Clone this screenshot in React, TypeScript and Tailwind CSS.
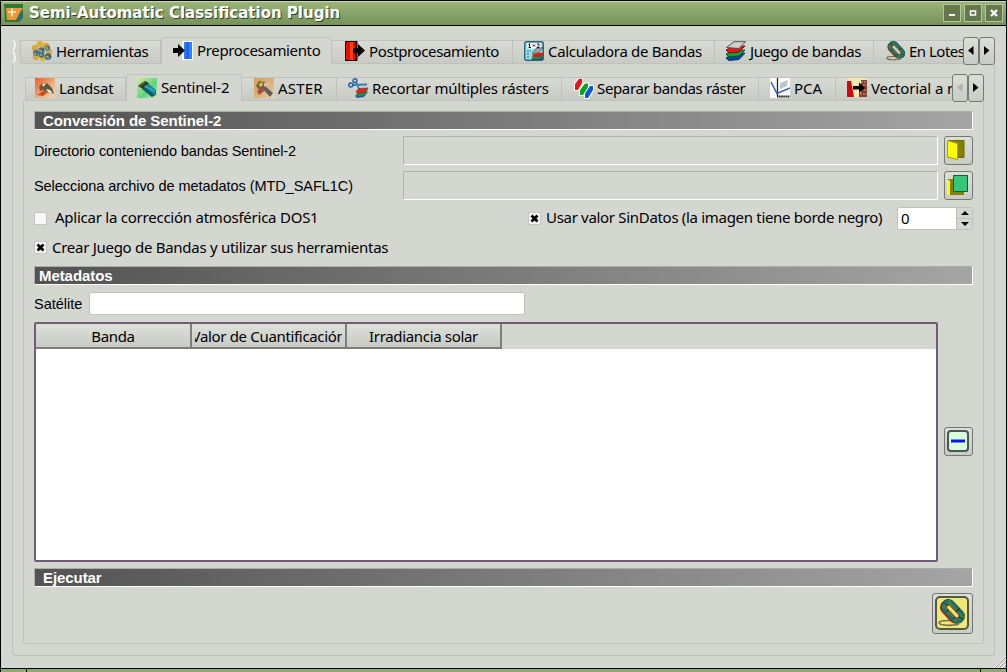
import React from "react";

const ub = "font-['Noto_Sans','Open_Sans',sans-serif]";
const ar = "font-['Liberation_Sans',Arial,sans-serif]";

function Globes() {
  const pts: [number, number, string][] = [[8, 3, "#e0b030"], [14, 5, "#d9a628"], [3, 7, "#d8a93a"], [17, 11, "#c9b04a"], [4, 16, "#dba834"], [11, 17, "#e2b63a"]];
  return (
    <svg width="20" height="20" viewBox="0 0 20 20">
      {pts.map(([x, y, c]) => <circle key={`${x}-${y}`} cx={x} cy={y} r="3.2" fill={c} />)}
      <circle cx="4" cy="12" r="3" fill="#3f6fa4" /><circle cx="9.500" cy="9.500" r="3.300" fill="#3b7296" />
      <circle cx="15.500" cy="7" r="2.800" fill="#5580a5" /><circle cx="16" cy="15.500" r="3.300" fill="#31609a" /><circle cx="9.500" cy="14" r="2.800" fill="#3d6a96" />
      <path d="M2 12l2 2M7 9l3 2M14 6l2 2M14 15l3 2M8 13l2 2" stroke="#8fc04c" strokeWidth="1.600" />
      <path d="M4 11l1-1M10 8l1 1M16 6l1 1M16 14l2 1" stroke="#b8402c" strokeWidth="1.500" />
    </svg>
  );
}

function ArrowIn() {
  return (
    <svg width="22" height="20" viewBox="0 0 22 20">
      <path d="M10 0h11v19H10z" fill="#fff" />
      <path d="M12 1h8v17h-8z" fill="#1668f0" /><path d="M12 1h2v17h-2z" fill="#3a78ee" /><path d="M17 1h3v17h-3z" fill="#2f7fff" />
      <path d="M1 7h5V3l7 6.500-7 6.500v-4H1z" fill="#000" />
    </svg>
  );
}

function ArrowOut() {
  return (
    <svg width="21" height="21" viewBox="0 0 21 21">
      <path d="M.5.5H12v19H.5z" fill="#e80c08" stroke="#000" />
      <path d="M5 1h3v18H5z" fill="#ff4010" /><path d="M10 1h2v18h-2z" fill="#400" />
      <path d="M8 7h5V3l7 6.500-7 6.500v-4H8z" fill="#000" />
    </svg>
  );
}

function Layers() {
  return (
    <svg width="22" height="21" viewBox="0 0 22 21">
      <path d="M1 17l6-4 13-1-6 6.500-10 1z" fill="#0c45a8" stroke="#092c66" />
      <path d="M1 13l6-3 13-1-6 6-10 1z" fill="#13a332" stroke="#075019" />
      <path d="M1 9l6-3 13-1-6 6-10 1z" fill="#ef141b" stroke="#780e0e" />
      <path d="M1.500 6.500L9 .7h11.500L14 7.500z" fill="#cfd0cc" stroke="#555" />
    </svg>
  );
}

function Calc() {
  return (
    <svg width="20" height="21" viewBox="0 0 20 21">
      <rect x=".7" y=".7" width="18.600" height="18.600" rx="2" fill="#9bdee8" stroke="#2a6674" strokeWidth="1.400" />
      <path d="M3 2h14v5.500H3z" fill="#fff" />
      <path d="M5.500 2.500V6.500M4.500 3.500l1-.7M4.500 6.500h2.500M9 3.500l2 2M11 3.500l-2 2M13 3h2v1.500l-2 2h2.500" stroke="#111" fill="none" />
      <path d="M3 10h2M3 13h2M6 10h1M3 16h2" stroke="#3e98aa" strokeWidth="1.300" />
      <path d="M7 19l4-3 8-1v4z" fill="#164f9b" /><path d="M7 18l4-4 8-1v3l-3 2z" fill="#1e8c33" />
      <path d="M7 15.500l4-3 8-1v2l-3 2.500z" fill="#d61b1b" /><path d="M8 13l4-5.500 7-1-4 5z" fill="#a4aaa7" stroke="#444" strokeWidth=".7" />
    </svg>
  );
}

function Ring({ size = 20, hole = "#d0d3cc" }: { size?: number; hole?: string }) {
  return (
    <svg width={size} height={size} viewBox="0 0 20 20">
      <path d="M15 18c-5 1.200-13 1-14-.6s3-2.200 8-2" fill="none" stroke="#777052" strokeWidth="1.200" />
      <g transform="rotate(47 10.500 9)">
        <rect x=".5" y="5" width="19" height="10" rx="5" fill="#b5301c" />
        <rect x=".5" y="3.500" width="20" height="10.500" rx="5.200" fill="#12362c" />
        <rect x="2.500" y="5.500" width="16" height="6.600" rx="3.300" fill="none" stroke="#2f8a3c" strokeWidth="3.200" strokeDasharray="6 .9" />
        <rect x="1.900" y="4.800" width="17.200" height="8" rx="4" fill="none" stroke="#22697e" strokeWidth="1.800" strokeDasharray="5.200 1.700" />
        <rect x="4.800" y="7.400" width="11.400" height="3" rx="1.500" fill={hole} stroke="#a8442c" strokeWidth=".8" />
      </g>
    </svg>
  );
}

function Satellite({ kind }: { kind: "landsat" | "sentinel" | "aster" }) {
  const cols = { landsat: ["#f05a28", "#e8b48a", "#efd9b4"], sentinel: ["#d9e8a0", "#58d67c", "#d8e4b4"], aster: ["#d3a066", "#e2b377", "#ead9ae"] }[kind];
  return (
    <svg width="20" height="20" viewBox="0 0 20 20">
      <defs><linearGradient id={kind} x2="1" y2="1"><stop stopColor={cols[0]} /><stop offset=".6" stopColor={cols[1]} /><stop offset="1" stopColor={cols[2]} /></linearGradient></defs>
      <rect width="20" height="20" fill={`url(#${kind})`} />
      {kind === "landsat" && <>
        <path d="M4 9l3-4 4 2-2 5-4 1z" fill="#7e5634" /><path d="M7 6l3 0 2 3-3 2z" fill="#efe6c8" />
        <path d="M8 9l4-4 5 5 2 6-4-1-6-2z" fill="#5a5a3c" /><path d="M11 11l4 1 3 4-5-2z" fill="#f6f2dc" /><path d="M2 17l6-4 5 1-5 4z" fill="#cf4a22" />
      </>}
      {kind === "sentinel" && <>
        <path d="M2 7l6-4 11 9v5l-4 2-8-7z" fill="#167d86" /><path d="M1 8l7-5 4 2-6 6z" fill="#32401e" />
        <path d="M9 7l9 5v3L7 9z" fill="#22a4bc" /><path d="M5 11l4-1 8 7-2 2z" fill="#125b66" /><path d="M3 8l5-4" stroke="#8a7a38" />
      </>}
      {kind === "aster" && <>
        <path d="M2 8l3-5 6 1-1 6-5 2z" fill="#79632e" /><path d="M3 13l6-4 1 4-5 4z" fill="#a0504a" />
        <path d="M10 5l6-1-2 5-4 1z" fill="#c9c4ac" /><path d="M11 8l8 7-3 4-7-8z" fill="#5b5c64" /><path d="M5 6l3-2 1 3-3 2z" fill="#d8c65b" />
      </>}
    </svg>
  );
}

function Scissors() {
  return (
    <svg width="21" height="20" viewBox="0 0 21 20">
      <path d="M5 7l14-.5M8 4l3 7" stroke="#397db0" strokeWidth="1.800" />
      <circle cx="2.800" cy="7" r="2" fill="none" stroke="#2463a1" strokeWidth="1.500" />
      <circle cx="7" cy="2.700" r="1.900" fill="none" stroke="#2463a1" strokeWidth="1.500" />
      <path d="M7 18l3-3 10-1-4 5-7 1z" fill="#1c5ba6" /><path d="M8 16l3-3 9-1-3 5-7 1z" fill="#2c9238" />
      <path d="M8 13.500l3-3 9-.5-3 4.500-7 1z" fill="#e0242a" stroke="#6d3322" strokeWidth=".7" />
    </svg>
  );
}

function Stripes() {
  return (
    <svg width="20" height="21" viewBox="0 0 20 21">
      <g fill="none" stroke="#fff" strokeWidth="2"><path d="M1 12V6L5 .8h3V5L4 12z" /><path d="M6 17v-5l5-6.500h3V9l-5 8z" /><path d="M11 20v-4.500l5-7.500h3v4L14 20z" /></g>
      <path d="M1 12V6L5 .8h3V5L4 12z" fill="#e9131d" /><path d="M6 17v-5l5-6.500h3V9l-5 8z" fill="#07a51c" /><path d="M11 20v-4.500l5-7.500h3v4L14 20z" fill="#1059d5" />
    </svg>
  );
}

function Pca() {
  return (
    <svg width="20" height="20" viewBox="0 0 20 20">
      <path d="M0 0h20v20H0z" fill="#fff" /><path d="M10 5l8-3-1 6-7 3z" fill="#b5cbc8" />
      <path d="M7.500 0v18" stroke="#222" strokeWidth="1.300" /><path d="M7 18.500h13" stroke="#111" strokeWidth="2" strokeDasharray="1.500 .6" />
      <path d="M1 4l6 11.500L20 10" stroke="#3264bc" strokeWidth="1.600" fill="none" />
    </svg>
  );
}

function VectorRaster() {
  return (
    <svg width="20" height="20" viewBox="0 0 20 20">
      <path d="M0 0h20v19H0z" fill="#f5e9b0" /><path d="M0 3h4l3 16H0z" fill="#cf0812" />
      <path d="M14 2h6v17h-8v-4h2z" fill="#873e32" /><path d="M14 4h5M16 7h4M14 12h5M13 16h7" stroke="#d2967e" strokeDasharray="2 1" />
      <path d="M6 8h6V4.500l6 5.500-6 5v-3.500H6z" fill="#000" />
    </svg>
  );
}

interface TabData { label: string; icon: React.ReactNode; box: string; text: string; active?: boolean }

function Tab({ label, icon, box, text, active }: TabData) {
  return (
    <div className={`flex shrink-0 overflow-hidden whitespace-nowrap border-[#bfc1bc] ${box} ${active
      ? "relative z-10 h-[27px] rounded-t-[4px] border border-b-0 bg-[#d4d7d0] pt-[3px]"
      : "mt-[3px] h-[24px] border-y border-r bg-linear-to-b from-[#d8dbd5] to-[#c8cbc4]"}`}>
      <span className="h-[21px] shrink-0">{icon}</span>
      <span className={`leading-[21px] ${active ? "-mt-px" : ""} ${text}`}>{label}</span>
    </div>
  );
}

function Scroller({ muted = false }: { muted?: boolean }) {
  const button = "flex h-[28px] w-[16px] items-center justify-center rounded-[3px] border border-[#757874] bg-linear-to-b from-[#dcded8] to-[#c9ccc5]";
  return (
    <div className="flex shrink-0">
      <div className={button}><svg width="6" height="10"><path d="M5.500 0v9L0 4.500z" fill={muted ? "#b0b3ad" : "#000"} /></svg></div>
      <div className={button}><svg width="6" height="10"><path d="M0 0v9l5.500-4.500z" fill="#000" /></svg></div>
    </div>
  );
}

function Band({ children, inset = "pl-[8px]" }: { children: string; inset?: string }) {
  return <h2 className={`h-[19px] ${inset} ${ar} border border-t-[#aaada7] border-r-white border-b-white border-l-[#b0b3ad] bg-linear-to-r from-[#535353] to-[#a5a5a5] text-[15px] leading-[18px] font-bold tracking-[-0.07px] text-white`}>{children}</h2>;
}

function Check({ on = false }: { on?: boolean }) {
  return <span className="flex size-[13px] shrink-0 items-center justify-center border border-[#c3c6c0] bg-[#f8f8f8]">{on && <svg width="9" height="9"><path d="M1.500 1.500l6 6M7.500 1.500l-6 6" stroke="#000" strokeWidth="2.800" /></svg>}</span>;
}

function ToolButton({ children, size = "size-[29px]" }: { children: React.ReactNode; size?: string }) {
  return <button className={`flex shrink-0 items-center justify-center rounded-[3px] border border-[#737773] bg-linear-to-b from-[#dcdfd9] to-[#c9ccc5] pr-[2px] pb-[2px] ${size}`}>{children}</button>;
}

const mainTabs: TabData[] = [
  { label: "Herramientas", icon: <Globes />, box: "w-[141px] border-l pl-[11px]", text: "ml-[4px] tracking-[-0.37px]" },
  { label: "Preprocesamiento", icon: <ArrowIn />, box: "w-[171px] pl-[10px]", text: "ml-[3px] tracking-[-0.35px]", active: true },
  { label: "Postprocesamiento", icon: <ArrowOut />, box: "w-[181px] pl-[13px]", text: "ml-[3px] tracking-[-0.38px]" },
  { label: "Calculadora de Bandas", icon: <Calc />, box: "w-[202px] pl-[11px]", text: "ml-[4px] tracking-[-0.33px]" },
  { label: "Juego de bandas", icon: <Layers />, box: "w-[159px] pl-[10px]", text: "ml-[3px] tracking-[-0.42px]" },
  { label: "En Lotes", icon: <Ring />, box: "w-[89px] border-r-0 pl-[12px]", text: "ml-[3px] tracking-[-0.5px]" },
];

const subTabs: TabData[] = [
  { label: "Landsat", icon: <Satellite kind="landsat" />, box: "w-[101px] border-l pl-[9px]", text: "ml-[4px] tracking-[-0.2px]" },
  { label: "Sentinel-2", icon: <Satellite kind="sentinel" />, box: "w-[116px] pl-[10px]", text: "ml-[4px] tracking-[-0.2px]", active: true },
  { label: "ASTER", icon: <Satellite kind="aster" />, box: "w-[95px] pl-[12px]", text: "ml-[4px] tracking-[0.2px]" },
  { label: "Recortar múltiples rásters", icon: <Scissors />, box: "w-[225px] pl-[11px]", text: "ml-[3px] tracking-[-0.2px]" },
  { label: "Separar bandas ráster", icon: <Stripes />, box: "w-[197px] pl-[12px]", text: "ml-[3px] tracking-[-0.36px]" },
  { label: "PCA", icon: <Pca />, box: "w-[77px] pl-[11px]", text: "ml-[4px]" },
  { label: "Vectorial a ráster", icon: <VectorRaster />, box: "w-[116px] border-r-0 pl-[11px]", text: "ml-[4px] tracking-[-0.12px]" },
];

export default function App() {
  return (
    <main className={`${ub} flex h-[672px] w-[1007px] flex-col overflow-hidden border border-b-0 border-black bg-[#d4d7d0] text-[15px] text-black`}>
      <header className="flex h-[25px] shrink-0 border-b border-black bg-linear-to-b from-[#9bb47a] to-[#779359] shadow-[inset_0_1px_#c6dda7]">
        <svg className="mt-[2px] ml-[3px]" width="20" height="20" viewBox="0 0 20 20">
          <path d="M0 1h19v12l-5 6H1z" fill="#2f7d33" /><path d="M1 2.500h18M1 17.500h13" stroke="#245a6a" strokeDasharray="1 1" />
          <path d="M2 5h17l-4 6-3 6H3z" fill="#f2953a" /><path d="M4 9h8M8 5.500v8" stroke="#fff2c8" strokeWidth="1.600" /><path d="M13 17l6-8v6l-4 4z" fill="#2e6a78" />
        </svg>
        <h1 className="mt-[1px] ml-[5px] flex-1 font-['DejaVu_Sans',sans-serif] text-[15px] leading-[22px] font-bold whitespace-nowrap text-white [text-shadow:1px_1px_#34402a]">Semi-Automatic Classification Plugin</h1>
        <div className="mt-[3px] mr-[3px] flex gap-[3px]">
          {["min", "max", "close"].map((kind) => (
            <button key={kind} className="flex size-[18px] items-center justify-center border border-[#b3c897] bg-[#66764f]">
              <svg width="8" height="8" fill="none" stroke="#fff" strokeWidth="2">
                {kind === "min" && <path d="M1 6h6" />}
                {kind === "max" && <path d="M1.500 2h5v4h-5z" strokeWidth="1.500" />}
                {kind === "close" && <path d="M1 1l6 6M7 1L1 7" strokeWidth="2.400" />}
              </svg>
            </button>
          ))}
        </div>
      </header>

      <nav className="mt-[11px] flex h-[27px] shrink-0 pl-[12px]">
        <svg className="mt-[3px] shrink-0" width="7" height="23"><path d="M0 0l2 3 0 3-2 5 2 5 0 4-1 3H7V0z" fill="#d0d3cc" /><path d="M0 0l2 3v3l-2 5 2 5v4l-2 3" fill="none" stroke="#fff" strokeWidth="1.300" /></svg>
        <div className="flex w-[943px] overflow-hidden">{mainTabs.map((tab) => <Tab key={tab.label} {...tab} />)}</div>
        <Scroller />
      </nav>

      <section className="ml-[11px] flex h-[592px] w-[983px] shrink-0 flex-col rounded-b-[3px] border border-t-0 border-[#bfc1bc] pl-[10px]">
        <nav className="mt-[10px] flex h-[27px] shrink-0 pl-[2px]">
          <div className="flex w-[927px] overflow-hidden">{subTabs.map((tab) => <Tab key={tab.label} {...tab} />)}</div>
          <Scroller muted />
        </nav>
        <div className="flex h-[543px] w-[961px] shrink-0 flex-col rounded-b-[3px] border border-t-0 border-[#bfc1bc] pr-[10px] pl-[10px]">
          <div className="mt-[10px]"><Band>Conversión de Sentinel-2</Band></div>
          <div className="mt-[6px] flex h-[29px] items-center">
            <label className={`${ar} w-[369px] pt-[2px] text-[14.500px] tracking-[-0.1px]`}>Directorio conteniendo bandas Sentinel-2</label>
            <div className="h-[29px] w-[535px] border border-t-[#b0b3ad] border-r-white border-b-white border-l-[#b0b3ad]" />
            <div className="ml-[6px]"><ToolButton><svg width="21" height="21"><path d="M1 1.500h16v17H1z" fill="#858000" stroke="#6b6800" /><path d="M.5 1.500l10 3v16L.5 18z" fill="#ff0" stroke="#a5a100" /></svg></ToolButton></div>
          </div>
          <div className="mt-[6px] flex h-[29px] items-center">
            <label className={`${ar} w-[369px] pt-[2px] text-[14.500px] tracking-[-0.06px]`}>Selecciona archivo de metadatos (MTD_SAFL1C)</label>
            <div className="h-[29px] w-[535px] border border-t-[#b0b3ad] border-r-white border-b-white border-l-[#b0b3ad]" />
            <div className="ml-[6px]"><ToolButton><svg width="21" height="21"><path d="M0 5h17v16H0z" fill="#858000" /><path d="M0 5l3 2v14H0z" fill="#ff0" /><path d="M6.500 1.500h14v16h-14z" fill="#35c778" stroke="#155b39" /></svg></ToolButton></div>
          </div>
          <div className="mt-[6px] flex h-[24px] items-center">
            <Check /><span className="-mt-[2px] ml-[8px] w-[473px] whitespace-nowrap tracking-[-0.24px]">Aplicar la corrección atmosférica DOS1</span>
            <Check on /><span className="-mt-[2px] ml-[5px] w-[351px] whitespace-nowrap tracking-[-0.31px]">Usar valor SinDatos (la imagen tiene borde negro)</span>
            <div className="mt-px flex h-[23px] w-[76px] rounded-[2px] border border-[#bfc1bc] bg-white"><span className="w-[59px] pl-[3px] leading-[21px]">0</span><div className="flex w-[16px] flex-col border-l border-[#bfc1bc] bg-[#d4d7d0]">
              <span className="flex h-[11px] items-center justify-center border-b border-[#bfc1bc]"><svg width="8" height="4"><path d="M4 0l4 4H0z" /></svg></span><span className="flex h-[10px] items-center justify-center"><svg width="8" height="4"><path d="M0 0h8L4 4z" /></svg></span>
            </div></div>
          </div>
          <div className="mt-[5px] flex h-[24px] items-center"><Check on /><span className="ml-[5px] tracking-[-0.28px]">Crear Juego de Bandas y utilizar sus herramientas</span></div>
          <div className="mt-[7px]"><Band inset="pl-[4px]">Metadatos</Band></div>
          <div className="mt-[7px] flex h-[23px] items-center"><label className={`${ar} w-[55px] pt-[2px] text-[14.500px]`}>Satélite</label><div className="h-[23px] w-[436px] rounded-[2px] border border-[#bfc1bc] bg-white" /></div>
          <div className="mt-[7px] flex h-[240px]">
            <div className="w-[904px] rounded-[2px] border-2 border-[#745b79] bg-white">
              <div className="flex h-[25px] bg-[#d4d7d0]">
                {["Banda", "Valor de Cuantificación", "Irradiancia solar"].map((name) => <div key={name} className="flex w-[155px] items-center justify-center border-r-2 border-b-2 border-[#7d7f7b] bg-linear-to-b from-[#dee0db] to-[#c8cbc4] px-[3px] pt-[2px] first:w-[156px]"><span className="flex w-full justify-center overflow-hidden whitespace-nowrap tracking-[-0.33px]">{name}</span></div>)}
              </div>
            </div>
            <div className="ml-[6px] pt-[105px]"><ToolButton><svg width="22" height="22"><rect x="1" y="1" width="20" height="20" rx="3" fill="#d9ffdf" stroke="#4d5752" strokeWidth="2" /><path d="M4 11h14" stroke="#0717e8" strokeWidth="3" /></svg></ToolButton></div>
          </div>
          <div className="mt-[6px]"><Band>Ejecutar</Band></div>
          <div className="mt-[6px] flex justify-end"><ToolButton size="size-[41px]"><span className="flex size-[34px] items-center justify-center rounded-[5px] border-2 border-[#555843] bg-[#eee878]"><Ring size={28} hole="#eee878" /></span></ToolButton></div>
        </div>
      </section>
      <footer className="mt-auto flex h-[17px] shrink-0 flex-col items-end"><svg width="13" height="12"><path d="M1 12L13 0M5 12l8-8M9 12l4-4" stroke="#fff" /><path d="M2 12L13 1M6 12l7-7M10 12l3-3" stroke="#999c94" /></svg>
        <div className="mt-auto flex h-[5px] w-full border-y border-black bg-[#91aa71]"><div className="w-[26px] border-r border-black" /><div className="flex-1" /><div className="w-[26px] border-l border-black" /></div>
      </footer>
    </main>
  );
}
